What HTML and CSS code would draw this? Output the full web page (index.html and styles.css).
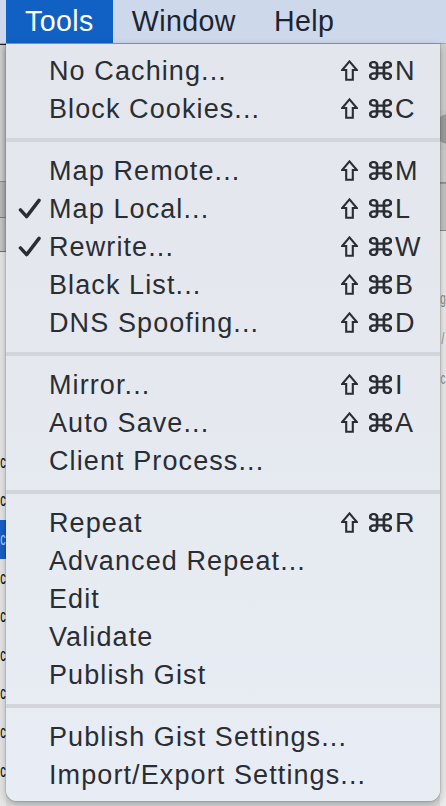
FILE: index.html
```html
<!DOCTYPE html>
<html>
<head>
<meta charset="utf-8">
<link rel="stylesheet" href="styles.css">
</head>
<body>
<div class="screen">
  <div class="menubar">
    <span class="mb-item active">Tools</span>
    <span class="mb-item">Window</span>
    <span class="mb-item">Help</span>
  </div>
  <div class="desk">
    <div class="side left">
      <div class="edge"></div>
      <div class="blk b1"></div>
      <div class="blk b2"></div>
      <div class="blk b3"></div>
      <div class="rows">
        <div class="bgrow"><span>c</span></div>
        <div class="bgrow"><span>c</span></div>
        <div class="bgrow sel"><span>c</span></div>
        <div class="bgrow"><span>c</span></div>
        <div class="bgrow"><span>c</span></div>
        <div class="bgrow"><span>c</span></div>
        <div class="bgrow"><span>c</span></div>
        <div class="bgrow"><span>c</span></div>
        <div class="bgrow"><span>c</span></div>
      </div>
    </div>

    <div class="menu-col">
      <div class="menu">
        <div class="item"><span class="chk"></span><span class="label">No Caching...</span><span class="sc"><svg class="shift" viewBox="0 0 17 21"><path d="M8.5 1.4 L15.8 10 H11.8 V19.8 H5.2 V10 H1.2 Z"/></svg><svg class="cmd" viewBox="2 2 20 20" preserveAspectRatio="none"><path d="M15 6v12a3 3 0 1 0 3-3H6a3 3 0 1 0 3 3V6a3 3 0 1 0-3 3h12a3 3 0 1 0-3-3"/></svg><span class="key">N</span></span></div>
        <div class="item"><span class="chk"></span><span class="label">Block Cookies...</span><span class="sc"><svg class="shift" viewBox="0 0 17 21"><path d="M8.5 1.4 L15.8 10 H11.8 V19.8 H5.2 V10 H1.2 Z"/></svg><svg class="cmd" viewBox="2 2 20 20" preserveAspectRatio="none"><path d="M15 6v12a3 3 0 1 0 3-3H6a3 3 0 1 0 3 3V6a3 3 0 1 0-3 3h12a3 3 0 1 0-3-3"/></svg><span class="key">C</span></span></div>
        <div class="sep"></div>
        <div class="item"><span class="chk"></span><span class="label">Map Remote...</span><span class="sc"><svg class="shift" viewBox="0 0 17 21"><path d="M8.5 1.4 L15.8 10 H11.8 V19.8 H5.2 V10 H1.2 Z"/></svg><svg class="cmd" viewBox="2 2 20 20" preserveAspectRatio="none"><path d="M15 6v12a3 3 0 1 0 3-3H6a3 3 0 1 0 3 3V6a3 3 0 1 0-3 3h12a3 3 0 1 0-3-3"/></svg><span class="key">M</span></span></div>
        <div class="item"><span class="chk"><svg viewBox="0 0 24 22"><path d="M2.5 12.5 L9 19.5 L22 2.5"/></svg></span><span class="label">Map Local...</span><span class="sc"><svg class="shift" viewBox="0 0 17 21"><path d="M8.5 1.4 L15.8 10 H11.8 V19.8 H5.2 V10 H1.2 Z"/></svg><svg class="cmd" viewBox="2 2 20 20" preserveAspectRatio="none"><path d="M15 6v12a3 3 0 1 0 3-3H6a3 3 0 1 0 3 3V6a3 3 0 1 0-3 3h12a3 3 0 1 0-3-3"/></svg><span class="key">L</span></span></div>
        <div class="item"><span class="chk"><svg viewBox="0 0 24 22"><path d="M2.5 12.5 L9 19.5 L22 2.5"/></svg></span><span class="label">Rewrite...</span><span class="sc"><svg class="shift" viewBox="0 0 17 21"><path d="M8.5 1.4 L15.8 10 H11.8 V19.8 H5.2 V10 H1.2 Z"/></svg><svg class="cmd" viewBox="2 2 20 20" preserveAspectRatio="none"><path d="M15 6v12a3 3 0 1 0 3-3H6a3 3 0 1 0 3 3V6a3 3 0 1 0-3 3h12a3 3 0 1 0-3-3"/></svg><span class="key">W</span></span></div>
        <div class="item"><span class="chk"></span><span class="label">Black List...</span><span class="sc"><svg class="shift" viewBox="0 0 17 21"><path d="M8.5 1.4 L15.8 10 H11.8 V19.8 H5.2 V10 H1.2 Z"/></svg><svg class="cmd" viewBox="2 2 20 20" preserveAspectRatio="none"><path d="M15 6v12a3 3 0 1 0 3-3H6a3 3 0 1 0 3 3V6a3 3 0 1 0-3 3h12a3 3 0 1 0-3-3"/></svg><span class="key">B</span></span></div>
        <div class="item"><span class="chk"></span><span class="label">DNS Spoofing...</span><span class="sc"><svg class="shift" viewBox="0 0 17 21"><path d="M8.5 1.4 L15.8 10 H11.8 V19.8 H5.2 V10 H1.2 Z"/></svg><svg class="cmd" viewBox="2 2 20 20" preserveAspectRatio="none"><path d="M15 6v12a3 3 0 1 0 3-3H6a3 3 0 1 0 3 3V6a3 3 0 1 0-3 3h12a3 3 0 1 0-3-3"/></svg><span class="key">D</span></span></div>
        <div class="sep"></div>
        <div class="item"><span class="chk"></span><span class="label">Mirror...</span><span class="sc"><svg class="shift" viewBox="0 0 17 21"><path d="M8.5 1.4 L15.8 10 H11.8 V19.8 H5.2 V10 H1.2 Z"/></svg><svg class="cmd" viewBox="2 2 20 20" preserveAspectRatio="none"><path d="M15 6v12a3 3 0 1 0 3-3H6a3 3 0 1 0 3 3V6a3 3 0 1 0-3 3h12a3 3 0 1 0-3-3"/></svg><span class="key">I</span></span></div>
        <div class="item"><span class="chk"></span><span class="label">Auto Save...</span><span class="sc"><svg class="shift" viewBox="0 0 17 21"><path d="M8.5 1.4 L15.8 10 H11.8 V19.8 H5.2 V10 H1.2 Z"/></svg><svg class="cmd" viewBox="2 2 20 20" preserveAspectRatio="none"><path d="M15 6v12a3 3 0 1 0 3-3H6a3 3 0 1 0 3 3V6a3 3 0 1 0-3 3h12a3 3 0 1 0-3-3"/></svg><span class="key">A</span></span></div>
        <div class="item"><span class="chk"></span><span class="label">Client Process...</span><span class="sc"></span></div>
        <div class="sep"></div>
        <div class="item"><span class="chk"></span><span class="label">Repeat</span><span class="sc"><svg class="shift" viewBox="0 0 17 21"><path d="M8.5 1.4 L15.8 10 H11.8 V19.8 H5.2 V10 H1.2 Z"/></svg><svg class="cmd" viewBox="2 2 20 20" preserveAspectRatio="none"><path d="M15 6v12a3 3 0 1 0 3-3H6a3 3 0 1 0 3 3V6a3 3 0 1 0-3 3h12a3 3 0 1 0-3-3"/></svg><span class="key">R</span></span></div>
        <div class="item"><span class="chk"></span><span class="label">Advanced Repeat...</span><span class="sc"></span></div>
        <div class="item"><span class="chk"></span><span class="label">Edit</span><span class="sc"></span></div>
        <div class="item"><span class="chk"></span><span class="label">Validate</span><span class="sc"></span></div>
        <div class="item"><span class="chk"></span><span class="label">Publish Gist</span><span class="sc"></span></div>
        <div class="sep"></div>
        <div class="item"><span class="chk"></span><span class="label">Publish Gist Settings...</span><span class="sc"></span></div>
        <div class="item"><span class="chk"></span><span class="label">Import/Export Settings...</span><span class="sc"></span></div>
      </div>
    </div>

    <div class="side right">
      <div class="blk r1"></div>
      <div class="blk r2"><span class="knob"></span></div>
      <div class="blk r3"></div>
      <div class="blk r4"></div>
      <div class="rrows">
        <div class="rrow"><span>g</span></div>
        <div class="rrow"><span>/</span></div>
        <div class="rrow"><span>c</span></div>
      </div>
    </div>
  </div>
</div>
</body>
</html>
```

FILE: styles.css
```css
* { box-sizing: border-box; }
html, body { margin: 0; padding: 0; }
body {
  width: 446px;
  height: 806px;
  overflow: hidden;
  background: #dcdcdc;
  font-family: "Liberation Sans", Arial, sans-serif;
}
.screen {
  width: 446px;
  height: 806px;
  display: flex;
  flex-direction: column;
}
.menubar {
  height: 44px;
  flex: none;
  display: flex;
  padding-left: 6px;
  background: #cdd9eb;
  border-bottom: 1px solid #9fa8b6;
}
.mb-item {
  height: 43px;
  line-height: 43px;
  padding: 0 19px;
  font-size: 28.6px;
  letter-spacing: 0.4px;
  color: #1d2430;
}
.mb-item.active {
  background: #1160c4;
  color: #ffffff;
}
.desk {
  flex: 1;
  display: flex;
  align-items: stretch;
  min-height: 0;
}
.side {
  width: 6px;
  flex: none;
  display: flex;
  flex-direction: column;
  overflow: hidden;
}
.left { background: #e6e6e6; }
.edge { height: 1px; background: #1b1e24; }
.blk { flex: none; }
.b1 { height: 137px; background: linear-gradient(90deg, #d2d2d2, #b9b9b9); border-bottom: 1px solid #8c8c8c; }
.b2 { height: 36px; background: linear-gradient(90deg, #bdbdbd, #a6a6a6); border-bottom: 1px solid #7e7e7e; }
.b3 { height: 34px; background: linear-gradient(90deg, #cbcbcb, #b3b3b3); border-bottom: 1px solid #6f6f6f; }
.rows { padding-top: 191px; }
.bgrow {
  height: 38.6px;
  display: flex;
  align-items: center;
  justify-content: center;
}
.bgrow span {
  display: block;
  font-size: 11px;
  line-height: 11px;
  color: #000;
  transform: scale(1, 1.7);
}
.bgrow.sel { background: #1a5fc8; }
.bgrow.sel span { color: #b9d0f2; }

.menu-col {
  width: 434px;
  flex: none;
  position: relative;
  z-index: 1;
}
.menu {
  background: linear-gradient(180deg, #e3e6ec 0%, #e5e9ef 45%, #e8edf5 100%);
  border-radius: 0 0 11px 11px;
  padding: 7px 0 8px;
  box-shadow: 0 0 0 1px rgba(0,0,0,0.10), 0 3px 8px rgba(0,0,0,0.28);
  color: #2a2d33;
}
.item {
  height: 38px;
  display: grid;
  grid-template-columns: 43px 1fr 87px;
  align-items: center;
  padding-right: 12px;
}
.chk {
  display: flex;
  justify-content: flex-end;
  padding-right: 8px;
  align-items: center;
  height: 38px;
}
.chk svg {
  width: 23px;
  height: 21px;
  fill: none;
  stroke: #2a2d33;
  stroke-width: 3.6;
  stroke-linecap: round;
  stroke-linejoin: round;
}
.label {
  font-size: 27px;
  letter-spacing: 1.1px;
  line-height: 38px;
  padding-top: 1px;
  white-space: nowrap;
}
.sc {
  display: flex;
  align-items: center;
  height: 38px;
}
.shift {
  flex: none;
  width: 17px;
  height: 21px;
  fill: none;
  stroke: #2a2d33;
  stroke-width: 2.1;
  stroke-linejoin: miter;
}
.cmd {
  flex: none;
  width: 23px;
  height: 19px;
  margin-left: 11px;
  fill: none;
  stroke: #2a2d33;
  stroke-width: 2.3;
}
.key {
  margin-left: 3px;
  font-size: 27px;
  line-height: 38px;
  padding-top: 1px;
}
.sep {
  height: 4px;
  margin: 11px 0 9px;
  background: #d2d6dc;
}

.right { background: #ebebeb; }
.r1 { height: 66px; background: #cfcfcf; }
.r2 { height: 40px; background: #c9c9c9; position: relative; }
.knob {
  position: absolute;
  left: -6px;
  top: 4px;
  width: 30px;
  height: 30px;
  border-radius: 50%;
  background: #9d9d9d;
}
.r3 { height: 33px; background: #cdcdcd; border-bottom: 1px solid #8e8e8e; }
.r4 { height: 48px; background: #c4c4c4; border-top: 1px solid #9a9a9a; border-bottom: 1px solid #8a8a8a; }
.rrows { padding-top: 48px; }
.rrow {
  height: 40px;
  display: flex;
  align-items: center;
  justify-content: center;
}
.rrow span {
  display: block;
  font-size: 10px;
  line-height: 10px;
  color: #8a8a8a;
  transform: scale(1, 1.7);
}
```
